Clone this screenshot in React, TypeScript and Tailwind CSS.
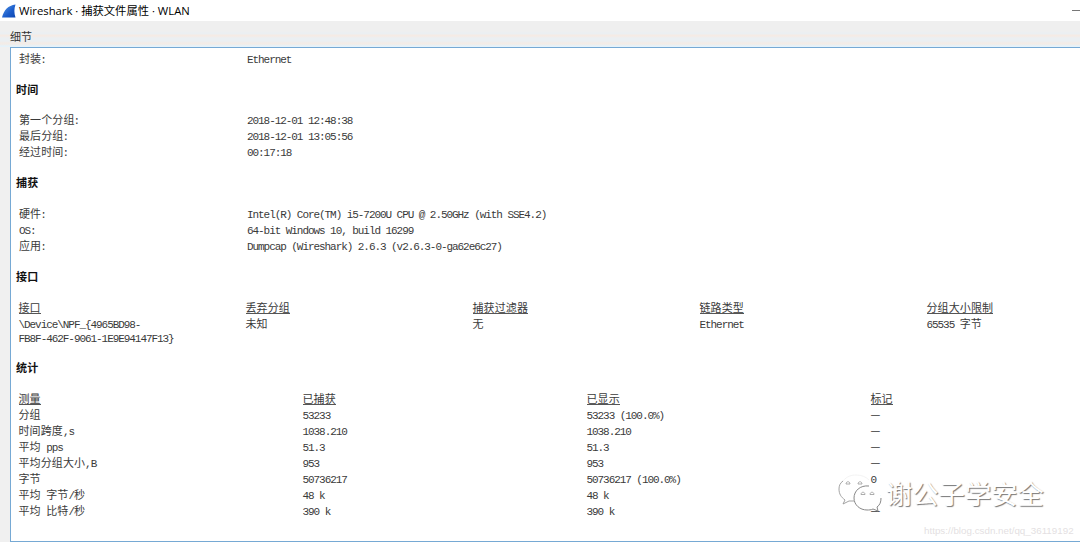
import React from "react";

const CJK = /([\u3000-\u9fff\uff00-\uffef]+)/;

function Text({ children }: { children: string }) {
  return (
    <>
      {children.split(CJK).map((run, i) =>
        run === "" ? null : CJK.test(run) ? (
          <span key={i} className="font-['Noto_Sans_CJK_SC',sans-serif] text-[11px] tracking-[0.1px]">
            {run}
          </span>
        ) : (
          <span
            key={i}
            className={`font-['Liberation_Mono',monospace] text-[11px] tracking-[-1.06px] ${run === ":" ? "-ml-px" : ""}`}
          >
            {run}
          </span>
        ),
      )}
    </>
  );
}

function Heading({ children, className = "h-[46px]" }: { children: string; className?: string }) {
  return (
    <h2
      className={`flex items-center pl-[5px] font-['Noto_Sans_CJK_SC',sans-serif] text-[11px] font-bold leading-4 tracking-[0.2px] text-[#111] ${className}`}
    >
      {children}
    </h2>
  );
}

function Pair({ label, value }: { label: string; value: string }) {
  return (
    <div className="flex h-4 pl-2">
      <div className="w-[228px] shrink-0">
        <Text>{label}</Text>
      </div>
      <div>
        <Text>{value}</Text>
      </div>
    </div>
  );
}

function Head({ children }: { children: string }) {
  return (
    <span className="block h-[15px] w-fit border-b border-[#555]">
      <Text>{children}</Text>
    </span>
  );
}

const stats = [
  ["分组", "53233", "53233 (100.0%)", "—"],
  ["时间跨度,s", "1038.210", "1038.210", "—"],
  ["平均 pps", "51.3", "51.3", "—"],
  ["平均分组大小,B", "953", "953", "—"],
  ["字节", "50736217", "50736217 (100.0%)", "0"],
  ["平均 字节/秒", "48 k", "48 k", "—"],
  ["平均 比特/秒", "390 k", "390 k", "—"],
];

function Watermark() {
  return (
    <div className="absolute left-[838px] top-[473px] flex items-center">
      <svg width="46" height="40" viewBox="0 0 46 40" fill="none">
        <path
          d="M5 8C2 10 1 13 1 16c0 5 2 8 6 11l-2 4 6-3 5 0"
          stroke="#999"
          strokeWidth="0.9"
        />
        <path d="M5 8C9 3 14 2 18 2c6 0 10 2 13 5" stroke="#f0f0f0" strokeWidth="0.8" />
        <path d="M29 14c-8 0-13 5-13 11s6 12 13 12c2 0 4 0 6-1l5 2-1-4c3-2 4-5 4-9 0-6-6-11-14-11Z" fill="#fff" />
        <path
          d="M31 13c-9-1-15 5-15 12s6 12 13 12c2 0 4 0 6-1l5 2-1-4c3-2 4-5 4-9"
          stroke="#888"
          strokeWidth="1"
        />
        <path
          d="M8 11c0-3 4-3 4 0ZM20 11c0-3 4-3 4 0ZM23 21.500c0-3 4-3 4 0ZM32 21.500c0-3 4-3 4 0Z"
          stroke="#999"
          strokeWidth="0.8"
        />
      </svg>
      <span className="ml-[2px] whitespace-nowrap font-['Noto_Sans_CJK_SC',sans-serif] text-[26.3px] leading-[40px] text-white [text-shadow:1px_1px_1px_#777]">
        谢公子学安全
      </span>
    </div>
  );
}

export default function App() {
  return (
    <div className="relative flex h-[542px] w-[1080px] flex-col overflow-hidden bg-[#f0f0f0]">
      <header className="flex h-[21px] shrink-0 items-center bg-white pl-[2px]">
        <svg width="14" height="14" viewBox="0 0 14 14">
          <defs>
            <linearGradient id="fin" x1="0" y1="0" x2="1" y2="1">
              <stop offset="0" stopColor="#5a9ae6" />
              <stop offset="0.6" stopColor="#1a5ccb" />
              <stop offset="1" stopColor="#0f48b0" />
            </linearGradient>
          </defs>
          <path d="M0 13.500C2 6 6 1.500 13.500 0.500c-1.500 4-1.500 9 0 13Z" fill="url(#fin)" />
        </svg>
        <h1 className="ml-[3px] whitespace-nowrap font-['Open_Sans','Noto_Sans_CJK_SC',sans-serif] text-[11.3px] leading-5 text-black">
          Wireshark · 捕获文件属性 · WLAN
        </h1>
        <span className="ml-auto h-px w-[8px] bg-[#777]" />
      </header>
      <div className="h-[26px] shrink-0 bg-[linear-gradient(#efefef_10px,#ebeff2_12px,#ebeff2_13px,#f5ebe5_14px,#f5ebe5_15px,#ebeff2_17px,#ebeff2_20px,#f3ece7_22px,#f3ece7_23px,#e5f2fa_25px)] pl-[10px] pt-[6px] font-['Noto_Sans_CJK_SC',sans-serif] text-[11px] leading-[18px] text-[#333]">
        细节
      </div>
      <main className="ml-[10px] h-[495px] border-y border-l border-[#76a9d4] bg-white pt-[2px] font-['Noto_Sans_CJK_SC',sans-serif] text-[11px] text-[#3a3a3a] [&_div]:whitespace-nowrap [&_div]:leading-4">
        <Pair label="封装:" value="Ethernet" />
        <Heading className="h-[45px]">时间</Heading>
        <Pair label="第一个分组:" value="2018-12-01 12:48:38" />
        <Pair label="最后分组:" value="2018-12-01 13:05:56" />
        <Pair label="经过时间:" value="00:17:18" />
        <Heading>捕获</Heading>
        <Pair label="硬件:" value="Intel(R) Core(TM) i5-7200U CPU @ 2.50GHz (with SSE4.2)" />
        <Pair label="OS:" value="64-bit Windows 10, build 16299" />
        <Pair label="应用:" value="Dumpcap (Wireshark) 2.6.3 (v2.6.3-0-ga62e6c27)" />
        <Heading>接口</Heading>
        <div className="grid h-[45px] grid-cols-[repeat(5,227px)] grid-rows-[16px_29px] pl-[7.5px]">
          {["接口", "丢弃分组", "捕获过滤器", "链路类型", "分组大小限制"].map((h) => (
            <div key={h}>
              <Head>{h}</Head>
            </div>
          ))}
          <div className="flex flex-col">
            <span className="h-[14px]">
              <Text>{"\\Device\\NPF_{4965BD98-"}</Text>
            </span>
            <span className="h-[14px]">
              <Text>{"FB8F-462F-9061-1E9E94147F13}"}</Text>
            </span>
          </div>
          {["未知", "无", "Ethernet", "65535 字节"].map((v) => (
            <div key={v}>
              <Text>{v}</Text>
            </div>
          ))}
        </div>
        <Heading>统计</Heading>
        <div className="grid auto-rows-[16.05px] grid-cols-[repeat(4,284px)] pl-[7.5px]">
          {["测量", "已捕获", "已显示", "标记"].map((h) => (
            <div key={h}>
              <Head>{h}</Head>
            </div>
          ))}
          {stats.flatMap((row, r) =>
            row.map((v, c) => (
              <div key={`${r}-${c}`}>
                {v === "—" ? (
                  <span className="font-['Noto_Sans_CJK_SC',sans-serif] text-[11px]">—</span>
                ) : (
                  <Text>{v}</Text>
                )}
              </div>
            )),
          )}
        </div>
      </main>
      <Watermark />
      <span className="absolute left-[924px] top-[524px] whitespace-nowrap font-['Liberation_Sans',sans-serif] text-[9.8px] leading-[14px] text-[#e4dfe2]">
        https://blog.csdn.net/qq_36119192
      </span>
    </div>
  );
}
